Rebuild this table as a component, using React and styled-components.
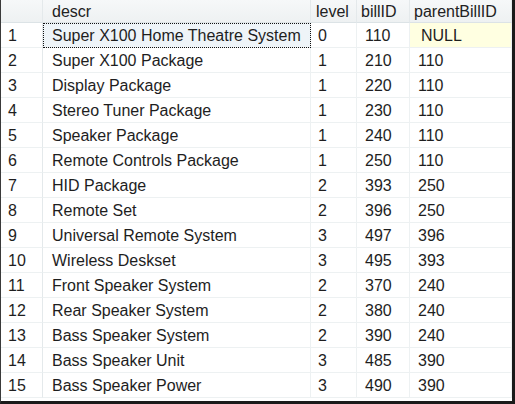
import { Fragment } from "react";
import styled, { createGlobalStyle } from "styled-components";

const Global = createGlobalStyle`
  html, body { margin: 0; padding: 0; background: #fff; }
`;

// рамка всієї сітки результатів
const Frame = styled.div`
  width: 515px;
  height: 404px;
  box-sizing: border-box;
  border-left: 1px solid #3a3a3a;
  border-right: 3px solid #1a1a1a;
  border-bottom: 3px solid #1a1a1a;
  overflow: hidden;
  font-family: "Liberation Sans", Arial, sans-serif;
  font-size: 16px;
  color: #1e1e1e;
`;

const Grid = styled.div`
  display: grid;
  grid-template-columns: 42px 268px 46px 53px 102px;
  grid-template-rows: 23px;
  grid-auto-rows: 25px;
`;

const Head = styled.div`
  background: linear-gradient(#f6f8f9, #eef1f2);
  border-right: 1px solid #e4e9eb;
  border-bottom: 1px solid #dce3e6;
  display: flex;
  align-items: center;
  padding: 1px 0 0 ${(p) => p.$pad || 8}px;
  color: #222;
`;

const RowNum = styled.div`
  background: #fff;
  border-right: 1px solid #e4e9eb;
  border-bottom: 1px solid #edf1f2;
  display: flex;
  align-items: center;
  padding: 2px 0 0 7px;
`;

const Cell = styled.div`
  background: ${(p) => (p.$null ? "#ffffe1" : p.$sel ? "#eef4f8" : "#fff")};
  border-right: 1px solid #edf1f2;
  border-bottom: 1px solid #edf1f2;
  outline: ${(p) => (p.$sel ? "1px dotted #111" : "none")};
  outline-offset: -1px;
  display: flex;
  align-items: center;
  padding: 2px 0 0 ${(p) => p.$pad || 8}px;
  white-space: nowrap;
  overflow: hidden;
`;

const rows = [
  ["Super X100 Home Theatre System", 0, 110, null],
  ["Super X100 Package", 1, 210, 110],
  ["Display Package", 1, 220, 110],
  ["Stereo Tuner Package", 1, 230, 110],
  ["Speaker Package", 1, 240, 110],
  ["Remote Controls Package", 1, 250, 110],
  ["HID Package", 2, 393, 250],
  ["Remote Set", 2, 396, 250],
  ["Universal Remote System", 3, 497, 396],
  ["Wireless Deskset", 3, 495, 393],
  ["Front Speaker System", 2, 370, 240],
  ["Rear Speaker System", 2, 380, 240],
  ["Bass Speaker System", 2, 390, 240],
  ["Bass Speaker Unit", 3, 485, 390],
  ["Bass Speaker Power", 3, 490, 390],
];

export default function App() {
  return (
    <>
      <Global />
      <Frame>
        <Grid>
          <Head />
          <Head $pad={9}>descr</Head>
          <Head $pad={5}>level</Head>
          <Head $pad={4}>billID</Head>
          <Head $pad={4}>parentBillID</Head>
          {rows.map((r, i) => (
            <Fragment key={i}>
              <RowNum>{i + 1}</RowNum>
              <Cell $pad={9} $sel={i === 0}>{r[0]}</Cell>
              <Cell $pad={7}>{r[1]}</Cell>
              <Cell $pad={8}>{r[2]}</Cell>
              <Cell $pad={r[3] === null ? 11 : 8} $null={r[3] === null}>
                {r[3] === null ? "NULL" : r[3]}
              </Cell>
            </Fragment>
          ))}
        </Grid>
      </Frame>
    </>
  );
}
